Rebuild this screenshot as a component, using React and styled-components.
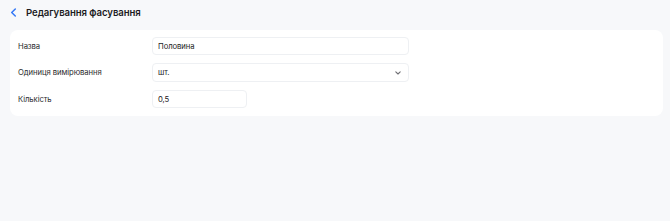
import React from "react";
import styled, { createGlobalStyle } from "styled-components";

const Global = createGlobalStyle`
  html, body { margin: 0; padding: 0; background: #f7f8fa; }
  body { font-family: Inter, "Noto Sans", sans-serif; color: #1c1c1e; -webkit-font-smoothing: antialiased; }
`;

const Page = styled.div`
  display: flex;
  flex-direction: column;
  padding: 0 7px 0 10px;
  min-height: 221px;
  box-sizing: border-box;
`;

const Header = styled.div`
  display: flex;
  align-items: center;
  gap: 9px;
  height: 24px;
  margin-bottom: 6px;
`;

const BackButton = styled.button`
  display: flex;
  align-items: center;
  justify-content: center;
  border: 0;
  background: none;
  padding: 0;
  width: 7px;
  height: 14px;
  cursor: pointer;
`;

const Title = styled.h1`
  margin: 0;
  font-size: 9.6px;
  font-weight: 600;
  letter-spacing: -0.08px;
  color: #1c1c1e;
`;

const Card = styled.div`
  background: #ffffff;
  border-radius: 8px;
  padding: 7px 8px 8px 8px;
  display: grid;
  grid-template-columns: 134px 1fr;
  row-gap: 8px;
  align-items: center;
`;

const Label = styled.div`
  font-size: 7.7px;
  letter-spacing: -0.08px;
  color: #2c2c2e;
`;

const Field = styled.div`
  box-sizing: border-box;
  width: ${(p) => p.$w}px;
  height: ${(p) => p.$h || 18}px;
  border: 1px solid #eef0f3;
  border-radius: 4px;
  display: flex;
  align-items: center;
  justify-content: space-between;
  padding: 0 7px 0 5px;
  font-size: 7.7px;
  letter-spacing: -0.08px;
  color: #1c1c1e;
`;

const Chevron = () => (
  <svg width="6" height="4" viewBox="0 0 6 4" fill="none">
    <path d="M0.8 0.9 L3 3 L5.2 0.9" stroke="#6e6e73" strokeWidth="1.1" strokeLinecap="round" strokeLinejoin="round" />
  </svg>
);

export default function App() {
  return (
    <>
      <Global />
      <Page>
        <Header>
          <BackButton aria-label="Назад">
            <svg width="7" height="11" viewBox="0 0 7 11" fill="none">
              <path d="M5.3 2 L1.7 5.5 L5.3 9" stroke="#3478f6" strokeWidth="1.5" strokeLinecap="round" strokeLinejoin="round" />
            </svg>
          </BackButton>
          <Title>Редагування фасування</Title>
        </Header>
        <Card>
          <Label>Назва</Label>
          <Field $w={257}>Половина</Field>
          <Label>Одиниця вимірювання</Label>
          <Field $w={257} $h={19}>
            <span>шт.</span>
            <Chevron />
          </Field>
          <Label>Кількість</Label>
          <Field $w={95}>0,5</Field>
        </Card>
      </Page>
    </>
  );
}
